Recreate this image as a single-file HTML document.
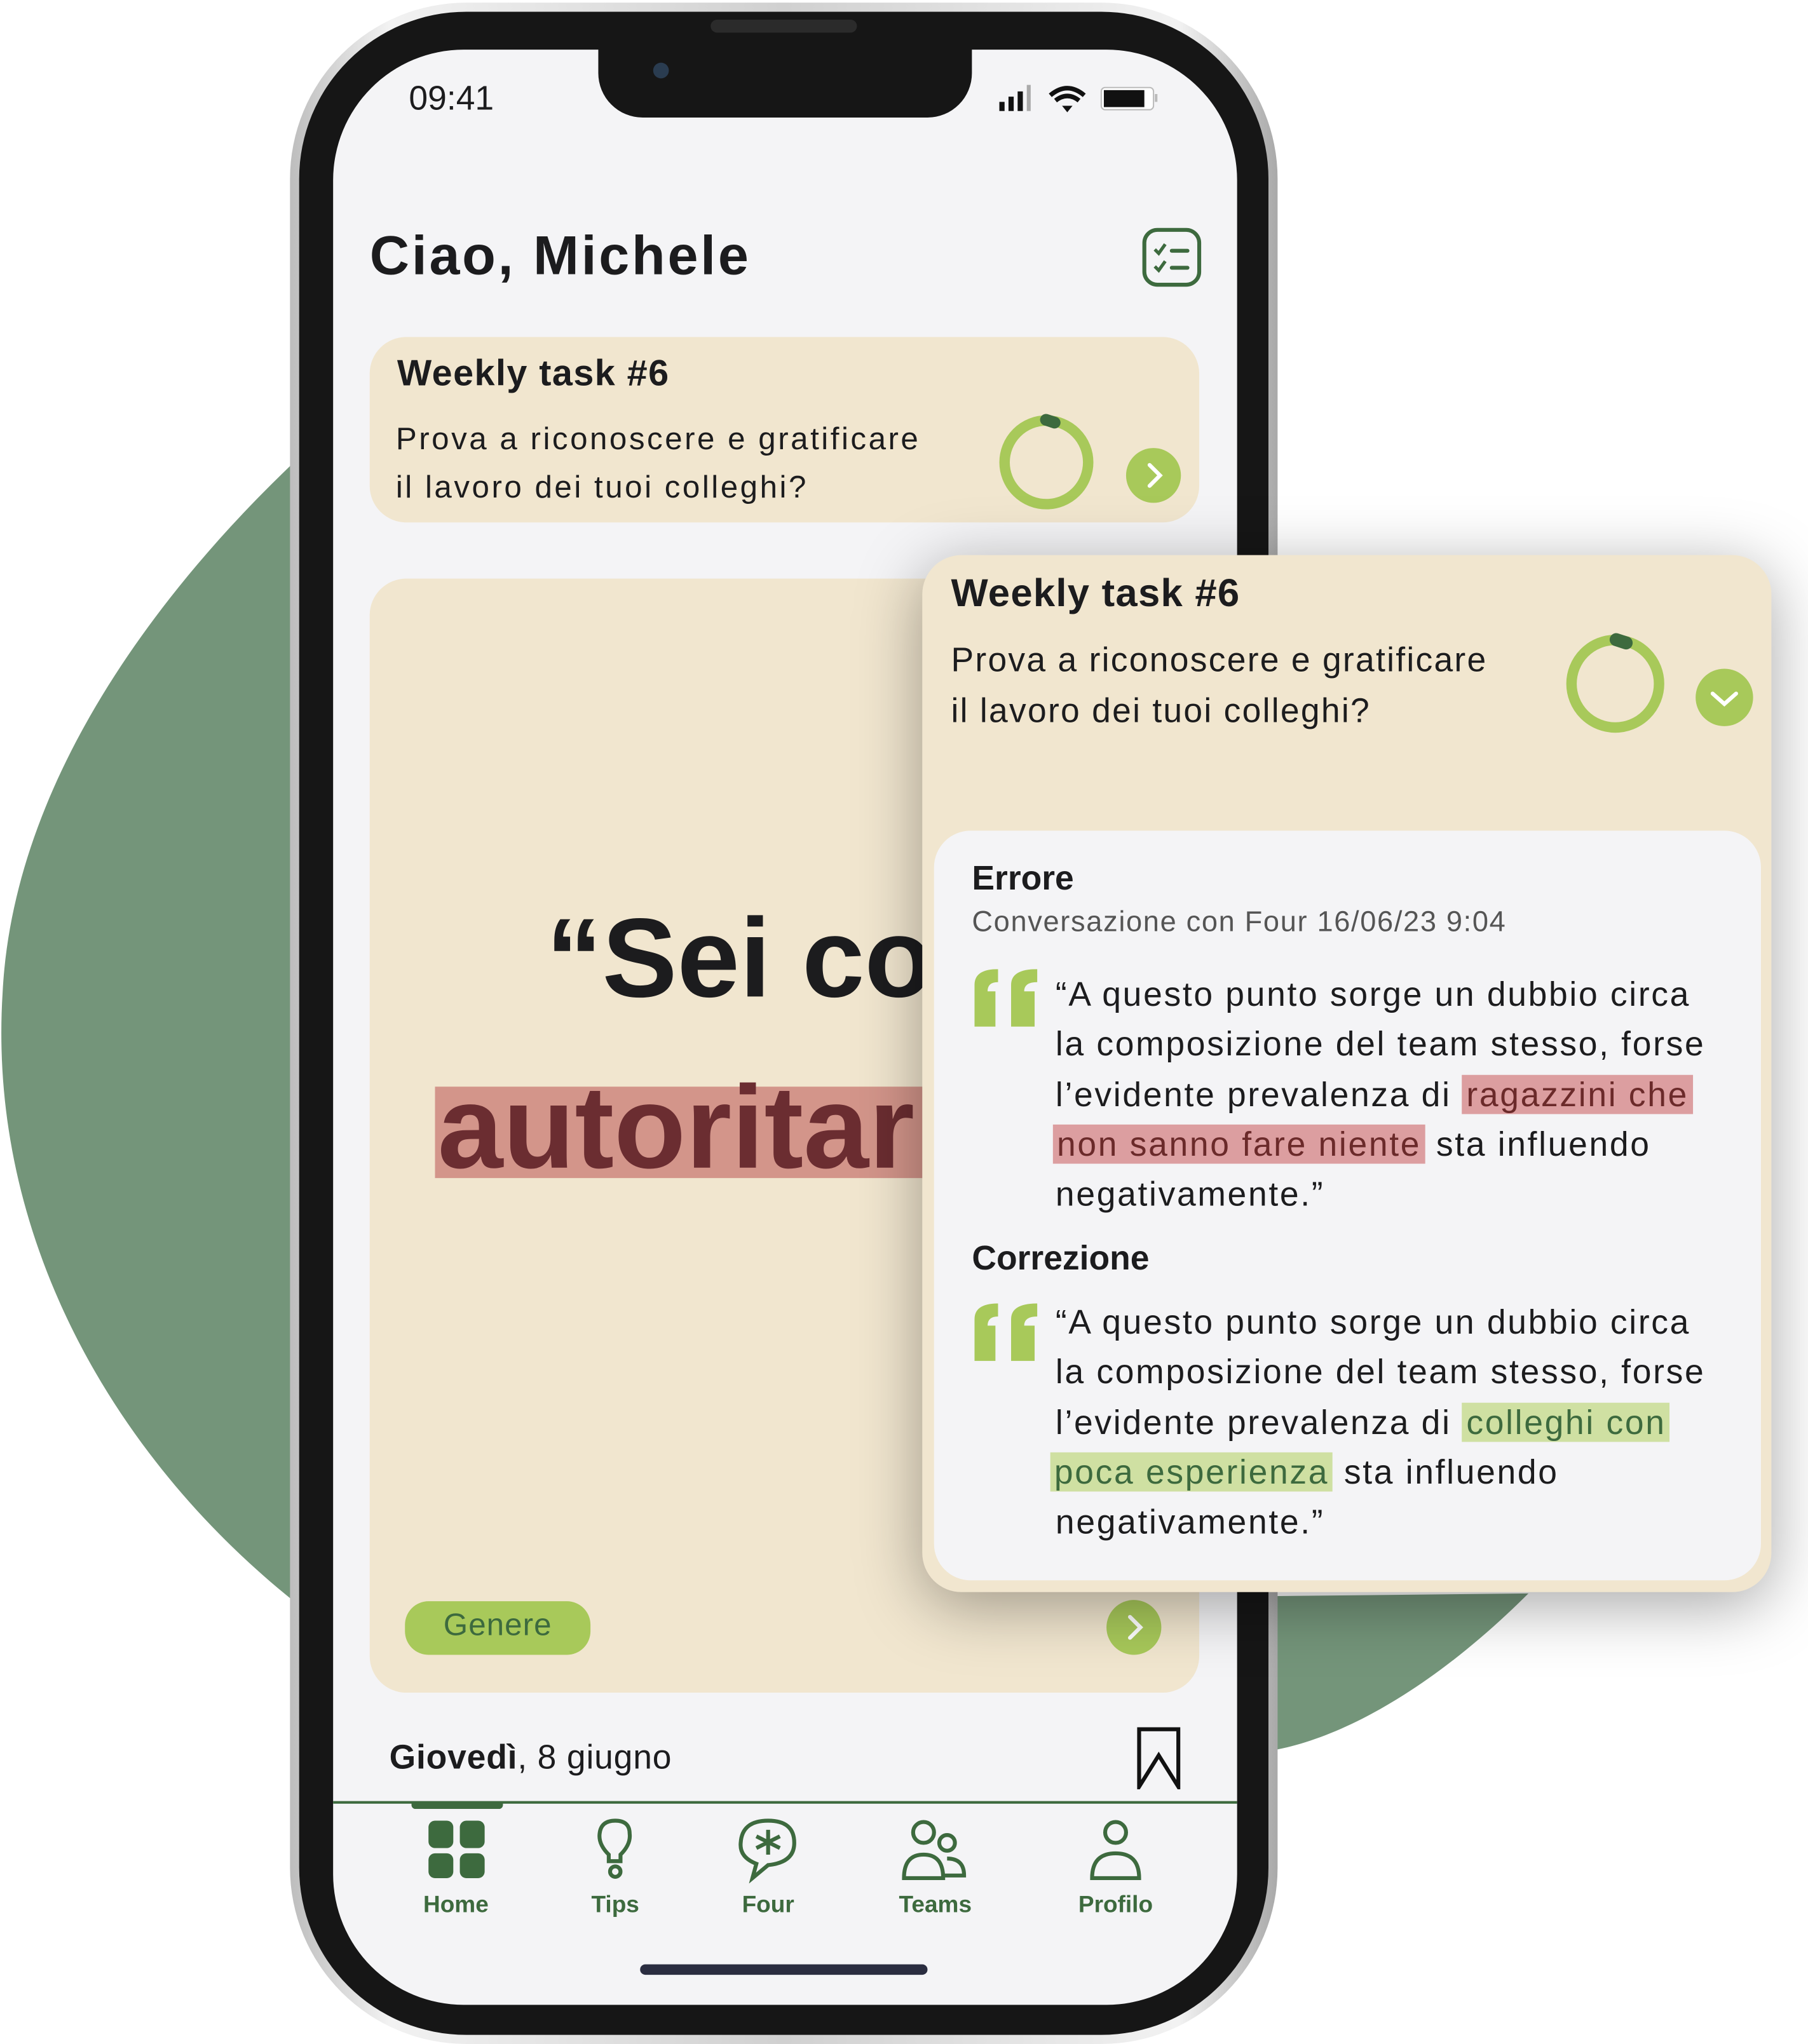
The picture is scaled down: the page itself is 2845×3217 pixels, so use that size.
<!DOCTYPE html>
<html><head><meta charset="utf-8">
<style>
html,body{margin:0;padding:0;background:#fff;}
body{width:2845px;height:3206px;overflow:hidden;position:relative;font-family:"Liberation Sans",sans-serif;}
#s{position:absolute;left:0;top:0;width:1384px;height:1560px;transform:scale(2.0556);transform-origin:0 0;}
.a{position:absolute;}
.t{position:absolute;white-space:nowrap;color:#1c1c1e;}
.ring{position:absolute;border-radius:50%;border:8px solid #a8c95a;box-sizing:border-box;}
.btn{position:absolute;border-radius:50%;background:#a8c95a;}
.nav{position:absolute;top:1448px;font-size:18px;font-weight:bold;color:#3d6a3e;width:120px;text-align:center;}
.q{font-size:26px;line-height:38.3px;color:#1c1c1e;letter-spacing:1.3px;}
.hr{background:#dc9ea0;color:#6b2a2a;padding:0 3px;}
.hg{background:#cfe0a2;color:#3d6a3e;padding:0 3px;}
</style></head><body><div id="s">
<svg class="a" style="left:0;top:0" width="1384" height="1560">
<path d="M240 340 C120 450 10 600 2 760 C-10 950 90 1120 230 1230 L1170 1220 C1100 1290 1030 1330 975 1340 L975 330 Z" fill="#74957a"/>
</svg>
<div class="a" style="left:222px;top:2px;width:756px;height:1563px;border-radius:135px;background:linear-gradient(90deg,#bdbdbd,#f2f2f2 10%,#d0d0d0 50%,#f2f2f2 90%,#a9a9a9);"></div>
<div class="a" style="left:229px;top:9px;width:742px;height:1549px;border-radius:128px;background:#161616;"></div>
<div class="a" style="left:255px;top:38px;width:692px;height:1497px;border-radius:100px;background:#f4f4f6;overflow:hidden;"></div>
<div class="a" style="left:458px;top:36px;width:286px;height:54px;background:#161616;border-radius:0 0 34px 34px;"></div>
<div class="a" style="left:500px;top:48px;width:12px;height:12px;border-radius:50%;background:#2a3c50;"></div>
<div class="a" style="left:544px;top:15px;width:112px;height:10px;border-radius:5px;background:#2b2b2b;"></div>
<div class="t" style="left:313px;top:60px;font-size:26px;">09:41</div>
<svg class="a" style="left:763px;top:62px" width="130" height="26">
<rect x="2" y="16" width="4" height="7" fill="#111"/><rect x="9" y="12" width="4" height="11" fill="#111"/><rect x="16" y="8" width="4" height="15" fill="#111"/><rect x="23" y="3" width="3" height="20" fill="#aaa"/>
<path d="M41 11 Q54 0 67 11" stroke="#111" stroke-width="3.5" fill="none"/><path d="M45 15 Q54 8 63 15" stroke="#111" stroke-width="3.5" fill="none"/><path d="M50 19 L54 24 L58 19 Z" fill="#111"/>
<rect x="80" y="5" width="40" height="17" rx="3" fill="#fff" stroke="#bbb"/><rect x="82" y="7" width="31" height="13" fill="#111"/><rect x="121" y="10" width="2" height="6" fill="#bbb"/>
</svg>
<div class="t" style="left:283px;top:172px;font-size:42px;font-weight:bold;letter-spacing:1.8px;">Ciao, Michele</div>
<svg class="a" style="left:874px;top:174px" width="46" height="46">
<rect x="2" y="2" width="42" height="42" rx="10" fill="none" stroke="#3d6a3e" stroke-width="3"/>
<path d="M10 17 l3 3 l5 -7 M10 30 l3 3 l5 -7" stroke="#3d6a3e" stroke-width="2.5" fill="none"/>
<path d="M23 18 H35 M23 31 H35" stroke="#3d6a3e" stroke-width="3" stroke-linecap="round"/>
</svg>
<div class="a" style="left:283px;top:258px;width:635px;height:142px;border-radius:28px;background:#f1e6cf;"></div>
<div class="t" style="left:304px;top:270px;font-size:28px;font-weight:bold;letter-spacing:0.7px;">Weekly task #6</div>
<div class="t" style="left:303px;top:318px;font-size:24px;line-height:37px;letter-spacing:1.7px;">Prova a riconoscere e gratificare<br>il lavoro dei tuoi colleghi?</div>
<div class="ring" style="left:765px;top:318px;width:72px;height:72px;"></div>
<div class="a" style="left:796px;top:318px;width:16px;height:9px;border-radius:5px;background:#3d6a3e;transform:rotate(18deg);"></div>
<div class="btn" style="left:862px;top:343px;width:42px;height:42px;"></div>
<svg class="a" style="left:862px;top:343px" width="42" height="42"><path d="M18 13 L26 21 L18 29" stroke="#fff" stroke-width="3" fill="none" stroke-linecap="round"/></svg>
<div class="a" style="left:283px;top:443px;width:635px;height:853px;border-radius:28px;background:#f1e6cf;overflow:hidden;">
<div class="t" style="left:135px;top:242px;font-size:86px;font-weight:bold;">“Sei consider</div>
<div class="a" style="left:50px;top:389px;width:600px;height:70px;background:#d3958a;"></div>
<div class="t" style="left:52px;top:370px;font-size:90px;font-weight:bold;color:#6b2d31;">autoritario</div>
</div>
<div class="a" style="left:310px;top:1226px;width:142px;height:41px;border-radius:18px;background:#a8c95a;"></div>
<div class="t" style="left:310px;top:1231px;width:142px;text-align:center;font-size:24px;color:#3d6a3e;letter-spacing:0.5px;">Genere</div>
<div class="btn" style="left:847px;top:1225px;width:42px;height:42px;"></div>
<svg class="a" style="left:847px;top:1225px" width="42" height="42"><path d="M18 13 L26 21 L18 29" stroke="#fff" stroke-width="3" fill="none" stroke-linecap="round"/></svg>
<div class="t" style="left:298px;top:1330px;font-size:26px;letter-spacing:0.4px;"><b>Giovedì</b>, 8 giugno</div>
<svg class="a" style="left:869px;top:1322px" width="36" height="48"><path d="M3 2 H33 V46 L18 22 L3 46 Z" fill="none" stroke="#111" stroke-width="3"/></svg>
<div class="a" style="left:255px;top:1379px;width:692px;height:2px;background:#3d6a3e;"></div>
<div class="a" style="left:315px;top:1380px;width:70px;height:5px;border-radius:0 0 3px 3px;background:#3d6a3e;"></div>
<svg class="a" style="left:320px;top:1392px" width="600" height="50" fill="none" stroke="#3d6a3e" stroke-width="3">
<rect x="8" y="2" width="19" height="21" rx="5" fill="#3d6a3e" stroke="none"/><rect x="32" y="2" width="19" height="21" rx="5" fill="#3d6a3e" stroke="none"/>
<rect x="8" y="27" width="19" height="19" rx="5" fill="#3d6a3e" stroke="none"/><rect x="32" y="27" width="19" height="19" rx="5" fill="#3d6a3e" stroke="none"/>
<path d="M146 33 L146 28 Q138 20 139 12 Q140 2 151 2 Q162 2 162 12 Q163 20 155 28 L155 33 Z"/><circle cx="151" cy="41" r="4"/>
<path d="M256 46 L259 35 Q246 30 247 19 Q248 2 268 2 Q288 2 288 19 Q288 34 268 36 Z"/><path d="M268 9 V28 M259 14 L277 23 M277 14 L259 23"/>
<circle cx="387" cy="11" r="8"/><circle cx="405" cy="19" r="6"/><path d="M372 46 Q372 28 387 28 Q402 28 402 46 Z"/><path d="M402 44 H418 Q418 31 405 31"/>
<circle cx="534" cy="11" r="8"/><path d="M516 46 Q516 27 534 27 Q552 27 552 46 Z"/>
</svg>
<div class="nav" style="left:289px;">Home</div>
<div class="nav" style="left:411px;">Tips</div>
<div class="nav" style="left:528px;">Four</div>
<div class="nav" style="left:656px;">Teams</div>
<div class="nav" style="left:794px;">Profilo</div>
<div class="a" style="left:490px;top:1504px;width:220px;height:8px;border-radius:4px;background:#2a2d40;"></div>
<div class="a" style="left:706px;top:425px;width:650px;height:794px;border-radius:30px;background:#f1e6cf;box-shadow:0 10px 50px rgba(0,0,0,0.35);"></div>
<div class="t" style="left:728px;top:438px;font-size:30px;font-weight:bold;letter-spacing:0.6px;">Weekly task #6</div>
<div class="t" style="left:728px;top:486px;font-size:26px;line-height:38.5px;letter-spacing:1.1px;">Prova a riconoscere e gratificare<br>il lavoro dei tuoi colleghi?</div>
<div class="ring" style="left:1199px;top:486px;width:75px;height:75px;"></div>
<div class="a" style="left:1232px;top:486px;width:18px;height:10px;border-radius:5px;background:#3d6a3e;transform:rotate(18deg);"></div>
<div class="btn" style="left:1298px;top:512px;width:44px;height:44px;"></div>
<svg class="a" style="left:1298px;top:512px" width="44" height="44"><path d="M13 19 L22 27 L31 19" stroke="#fff" stroke-width="3" fill="none" stroke-linecap="round"/></svg>
<div class="a" style="left:715px;top:636px;width:633px;height:574px;border-radius:28px;background:#f4f4f6;"></div>
<div class="t" style="left:744px;top:657px;font-size:26px;font-weight:bold;">Errore</div>
<div class="t" style="left:744px;top:693px;font-size:22px;color:#555;letter-spacing:0.8px;">Conversazione con Four 16/06/23 9:04</div>
<svg class="a" style="left:744px;top:742px" width="54" height="46" fill="#a8c95a"><path d="M2 12 Q2 0 20 0 L20 10 Q12 10 12 17 L18 17 L18 44 L2 44 Z"/><path d="M30 12 Q30 0 50 0 L50 10 Q40 10 40 17 L48 17 L48 44 L30 44 Z"/></svg>
<div class="t q" style="left:808px;top:742px;">“A questo punto sorge un dubbio circa<br>la composizione del team stesso, forse<br>l’evidente prevalenza di <span class="hr">ragazzini che</span><br><span class="hr" style="margin-left:-2px">non sanno fare niente</span> sta influendo<br>negativamente.”</div>
<div class="t" style="left:744px;top:948px;font-size:26px;font-weight:bold;">Correzione</div>
<svg class="a" style="left:744px;top:998px" width="54" height="46" fill="#a8c95a"><path d="M2 12 Q2 0 20 0 L20 10 Q12 10 12 17 L18 17 L18 44 L2 44 Z"/><path d="M30 12 Q30 0 50 0 L50 10 Q40 10 40 17 L48 17 L48 44 L30 44 Z"/></svg>
<div class="t q" style="left:808px;top:993px;">“A questo punto sorge un dubbio circa<br>la composizione del team stesso, forse<br>l’evidente prevalenza di <span class="hg">colleghi con</span><br><span class="hg" style="margin-left:-4px">poca esperienza</span> sta influendo<br>negativamente.”</div>
</div></body></html>
